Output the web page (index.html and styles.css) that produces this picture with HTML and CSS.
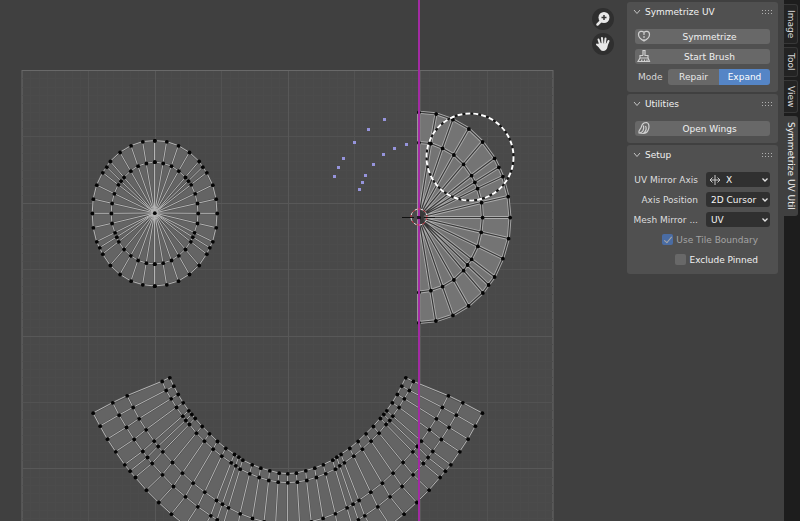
FILE: index.html
```html
<!DOCTYPE html>
<html lang="en">
<head>
<meta charset="utf-8">
<title>UV Editor</title>
<link rel="stylesheet" href="styles.css">
</head>
<body>
<div class="editor">
  <svg class="uv-canvas" aria-label="UV layout">
    <rect class="tile" x="22" y="70.5" width="531" height="531"/>
    <g id="grid"></g>
    <g id="meshes"></g>
    <g id="pinned"></g>
    <path class="mirror-axis" d="M419 0V2000"/>
    <circle class="brush-back" cx="470" cy="157" r="43.5"/>
    <circle class="brush" cx="470" cy="157" r="43.5"/>
    <circle class="cursor-back" cx="419" cy="217" r="8"/>
    <circle class="cursor-ring" cx="419" cy="217" r="8"/>
    <path class="cursor-cross" d="M402 217.500H414M424 217.500H435"/>
    <rect x="417" y="216" width="3" height="3" fill="#26122a"/>
  </svg>
  <main class="viewport">
    <div class="gizmos">
      <button class="gizmo" type="button" aria-label="Zoom">
        <svg width="22" height="22" viewBox="0 0 22 22"><path d="M9 13L5.500 16.500" stroke="#e8e8e8" stroke-width="2.500" stroke-linecap="round"/><circle cx="12" cy="9.500" r="5.500" fill="#e8e8e8"/><path d="M9.500 9.500H14.500M12 7V12" stroke="#333" stroke-width="1.500"/></svg>
      </button>
      <button class="gizmo" type="button" aria-label="Pan">
        <svg width="22" height="22" viewBox="0 0 22 22"><g fill="none" stroke="#e8e8e8" stroke-width="2" stroke-linecap="round"><path d="M8 11L6.500 6.500M10.500 10L10 5M13 10L13.500 5.500M15 11.500L16.500 8M8 14L5 11.500"/></g><path d="M7 10L16 10.500L15.500 14Q14.500 18 11 18Q9 18 7.500 15.500L5.500 12Z" fill="#e8e8e8"/></svg>
      </button>
    </div>
  </main>
  <aside class="sidebar">
    <section class="panel">
      <h2 class="panel-title"><svg class="chevron" viewBox="0 0 8 6"><path d="M1 1L4 4.500L7 1"/></svg>Symmetrize UV<span class="grip"></span></h2>
      <div class="rows">
        <button class="op" type="button"><svg class="op-icon" viewBox="0 0 14 14"><path d="M7 3.500C5.500 1.500 1.500 2 1.500 5.500C1.500 9 5 11 7 12C9 11 12.500 9 12.500 5.500C12.500 2 8.500 1.500 7 3.500Z"/><path stroke-dasharray="2 1" d="M7 4V11"/></svg>Symmetrize</button>
        <button class="op" type="button"><svg class="op-icon" viewBox="0 0 14 14"><path d="M6 6.500V1.500H8V6.500H11V9H3V6.500H6M3 9L1 12.500H12.500L11 9M4.500 12.500L5 10.500M7.500 12.500V10.500M10 12.500V10.500"/></svg>Start Brush</button>
        <div class="mode">
          <span class="mode-label" id="mode">Mode</span>
          <div class="segments" role="group" aria-labelledby="mode">
            <button class="segment" type="button">Repair</button>
            <button class="segment active" type="button">Expand</button>
          </div>
        </div>
      </div>
    </section>
    <section class="panel">
      <h2 class="panel-title"><svg class="chevron" viewBox="0 0 8 6"><path d="M1 1L4 4.500L7 1"/></svg>Utilities<span class="grip"></span></h2>
      <div class="rows">
        <button class="op" type="button"><svg class="op-icon" viewBox="0 0 14 14"><path d="M2 12C1 9 4 8.500 4.500 5.500Q5.500 1.500 9.500 1.500C12.500 2 12.500 7 11 9.500Q9.500 12.500 6.500 12.500ZM2.500 12C5.500 11.500 7.500 9 6.500 4.500M6.500 12.500C9 10 10 7.500 8.500 5"/></svg>Open Wings</button>
      </div>
    </section>
    <section class="panel">
      <h2 class="panel-title"><svg class="chevron" viewBox="0 0 8 6"><path d="M1 1L4 4.500L7 1"/></svg>Setup<span class="grip"></span></h2>
      <div class="rows">
        <div class="field">
          <label for="axis">UV Mirror Axis</label>
          <div class="pick">
            <svg class="axis-icon" viewBox="0 0 12 10"><path d="M6 0V10M1 5H11M3.500 2.500L1 5L3.500 7.500M8.500 2.500L11 5L8.500 7.500"/></svg>
            <select id="axis" class="with-icon"><option>X</option><option>Y</option></select>
            <svg class="arrow" viewBox="0 0 8 6"><path d="M1.500 1.500L4 4L6.500 1.500"/></svg>
          </div>
        </div>
        <div class="field">
          <label for="position">Axis Position</label>
          <div class="pick">
            <select id="position"><option>2D Cursor</option></select>
            <svg class="arrow" viewBox="0 0 8 6"><path d="M1.500 1.500L4 4L6.500 1.500"/></svg>
          </div>
        </div>
        <div class="field">
          <label for="mesh">Mesh Mirror ...</label>
          <div class="pick">
            <select id="mesh"><option>UV</option></select>
            <svg class="arrow" viewBox="0 0 8 6"><path d="M1.500 1.500L4 4L6.500 1.500"/></svg>
          </div>
        </div>
        <label class="check muted"><input type="checkbox" checked disabled>Use Tile Boundary</label>
        <label class="check"><input type="checkbox">Exclude Pinned</label>
      </div>
    </section>
  </aside>
  <nav class="tabs">
    <button class="tab" type="button">Image</button>
    <button class="tab" type="button">Tool</button>
    <button class="tab" type="button">View</button>
    <button class="tab current" type="button">Symmetrize UV Util</button>
  </nav>
</div>
<script src="mesh.js"></script>
</body>
</html>
```
FILE: styles.css
```css
* { box-sizing: border-box; }
body {
  margin: 0;
  background: #404040;
  color: #f0f0f0;
  font: 9px/14px "DejaVu Sans", sans-serif;
}
button, select, input { font: inherit; color: inherit; margin: 0; }
.editor {
  position: relative;
  display: flex;
  min-height: 100vh;
  overflow: hidden;
}
.uv-canvas { position: absolute; inset: 0; width: 100%; height: 100%; }
.tile { fill: #494949; stroke: #696969; stroke-width: 1; }
.grid-minor { stroke: #4b4b4b; fill: none; }
.grid-major { stroke: #525252; fill: none; }
.grid-strong { stroke: #585858; fill: none; }
.face { fill: #646464; }
.face.bright { fill: #747474; }
.edge { fill: none; stroke: #b4b4b4; stroke-width: 1; }
.edge-under { fill: none; stroke: #505050; stroke-width: 2; }
.edge.selected { stroke: #acacac; stroke-width: 3; }
.edge-core { fill: none; stroke: #383838; stroke-width: 1.2; }
.vertex { fill: #050505; }
.pin { fill: #9694dc; }
.mirror-axis { stroke: #a32ba3; stroke-width: 2; }
.brush-back { fill: none; stroke: #151515; stroke-width: 2; }
.brush { fill: none; stroke: #fff; stroke-width: 2; stroke-dasharray: 5 3; }
.cursor-back { fill: none; stroke: #e8e8e8; stroke-dasharray: 3 3; stroke-dashoffset: 3; }
.cursor-ring { fill: none; stroke: #d83a4a; stroke-dasharray: 3 3; }
.cursor-cross { stroke: #111; fill: none; }

.viewport { position: relative; flex: 1; display: flex; justify-content: flex-end; padding: 8px 13px; }
.gizmos { display: flex; flex-direction: column; gap: 3px; }
.gizmo {
  width: 22px;
  height: 22px;
  padding: 0;
  border: 0;
  border-radius: 50%;
  background: #2f2f2f;
}
.gizmo svg { display: block; fill: none; }

.sidebar {
  position: relative;
  display: flex;
  flex-direction: column;
  gap: 2px;
  width: 151px;
  margin-right: 6px;
  padding-top: 2px;
}
.panel { background: #505050; border-radius: 3px; padding: 0 8px 7px; }
.panel-title {
  display: flex;
  align-items: center;
  height: 20px;
  margin: 0 0 7px;
  font-size: 9px;
  font-weight: 400;
}
.chevron { flex: none; width: 8px; height: 6px; margin: 0 4px 0 -2px; fill: none; stroke: #c4c4c4; }
.grip {
  width: 12px;
  height: 6px;
  margin-left: auto;
  margin-right: -3px;
  background: radial-gradient(circle, #b0b0b0 1px, transparent 1px) 0 0 / 3px 3px;
}
.rows { display: flex; flex-direction: column; gap: 5px; }
.op {
  position: relative;
  display: flex;
  align-items: center;
  justify-content: center;
  height: 15px;
  padding: 0 0 0 14px;
  border: 0;
  border-radius: 3px;
  background: #686868;
}
.op-icon { position: absolute; left: 2px; top: 0; width: 14px; height: 14px; fill: none; stroke: #d0d0d0; stroke-width: 1.2; }
.mode { display: flex; align-items: center; justify-content: space-between; color: #d8d8d8; padding-left: 3px; }
.segments { display: flex; width: 102px; border-radius: 3px; overflow: hidden; }
.segment { flex: 1; height: 16px; padding: 0; border: 0; background: #686868; color: #eaeaea; }
.segment.active { background: #5585c6; color: #fff; }
.field { display: flex; align-items: center; justify-content: flex-end; gap: 8px; white-space: nowrap; color: #dedede; }
.pick { position: relative; flex: none; width: 64px; color: #f4f4f4; }
.pick select {
  display: block;
  appearance: none;
  width: 100%;
  height: 15px;
  padding: 0 0 0 5px;
  border: 0;
  border-radius: 3px;
  background: #303030;
}
.pick select.with-icon { padding-left: 20px; }
.axis-icon { position: absolute; left: 3px; top: 3px; width: 12px; height: 10px; fill: none; stroke: #c9c9c9; pointer-events: none; }
.arrow { position: absolute; right: 1px; top: 5px; width: 8px; height: 6px; fill: none; stroke: #e4e4e4; stroke-width: 1.3; pointer-events: none; }
.check { display: flex; align-items: center; justify-content: flex-end; gap: 3px; height: 15px; padding-right: 12px; }
.check input { appearance: none; width: 11px; height: 11px; border-radius: 2px; background: #686868; }
.check input:checked { background: #4a6ca3; position: relative; }
.check input:checked::after {
  content: "";
  position: absolute;
  left: 4px;
  top: 1px;
  width: 3px;
  height: 7px;
  border: solid #a8a8a8;
  border-width: 0 1px 1px 0;
  transform: rotate(40deg);
}
.muted { color: #a4a4a4; }

.tabs {
  position: relative;
  display: flex;
  flex-direction: column;
  align-items: flex-start;
  gap: 3px;
  width: 16px;
  padding-top: 4px;
  background: #1d1d1d;
}
.tab {
  writing-mode: vertical-rl;
  width: 14px;
  line-height: 12px;
  padding: 5px 0;
  border: 1px solid #383838;
  border-left: 0;
  border-radius: 0 3px 3px 0;
  background: #232323;
  color: #d8d8d8;
  white-space: nowrap;
}
.tab.current { background: #404040; border-color: #404040; color: #f0f0f0; }
```
FILE: mesh.js
```js
const NS = "http://www.w3.org/2000/svg";
const byId = id => document.getElementById(id);

function add(parent, tag, attrs) {
  const el = document.createElementNS(NS, tag);
  for (const k in attrs) el.setAttribute(k, attrs[k]);
  parent.appendChild(el);
}

// Each ring is stored at three units per pixel, relative to an origin.
const toPixels = (ring, ox, oy) => ring.map(([x, y]) => [ox + x / 3, oy + y / 3]);
const mirror = (ring, axis) => ring.map(([x, y]) => [2 * axis - x, y]).reverse();
const line = pts => "M" + pts.map(p => p.map(n => n.toFixed(1)).join(" ")).join("L");

function draw(rings, hub, bright) {
  const g = byId("meshes");
  const outer = rings[0];
  const last = rings[rings.length - 1];
  const boundary = hub ? outer : outer.concat([...last].reverse());
  add(g, "path", { class: "face" + (bright ? " bright" : ""), d: line(boundary) + "Z" });
  let d = rings.map(line).join("");
  outer.forEach((p, i) => {
    const spoke = rings.map(r => r[i]);
    if (hub) spoke.push(hub);
    d += line(spoke);
  });
  if (bright) {
    add(g, "path", { class: "edge selected", d });
    add(g, "path", { class: "edge-core", d });
  } else {
    add(g, "path", { class: "edge-under", d });
    add(g, "path", { class: "edge", d });
  }
  rings.flat().concat(hub ? [hub] : []).forEach(([x, y]) =>
    add(g, "circle", { class: "vertex", cx: (x + 0.2).toFixed(1), cy: (y + 0.2).toFixed(1), r: 1.9 }));
}

let minor = "", major = "", strong = "";
for (let i = 1; i < 64; i++) {
  const x = Math.round(22 + i * 8.3) + 0.5, y = Math.round(70 + i * 8.3) + 0.5;
  const d = `M${x} 71V601M22.5 ${y}H553`;
  if (i % 16 === 0) strong += d;
  else if (i % 8 === 0) major += d;
  else minor += d;
}
add(byId("grid"), "path", { class: "grid-minor", d: minor });
add(byId("grid"), "path", { class: "grid-major", d: major });
add(byId("grid"), "path", { class: "grid-strong", d: strong });

const disc = [
  [[223,31],[259,34],[294,46],[327,66],[356,93],[367,110],[379,127],[397,164],[407,206],[410,249],[407,292],[397,334],[388,352],[379,371],[356,405],[327,432],[294,452],[259,463],[223,467]],
  [[223,95],[248,99],[273,107],[295,122],[315,141],[324,152],[332,163],[344,190],[351,219],[353,249],[351,279],[342,307],[337,320],[331,334],[315,357],[295,376],[273,390],[248,398],[223,401]]
].map(r => toPixels(r, 80.3, 130.3)).map(r => r.concat(mirror(r, 154.6)));
draw(disc, [154.6, 213], false);

const half = [
  [[0,-316],[52,-311],[102,-294],[150,-266],[191,-227],[227,-178],[240,-151],[252,-123],[268,-63],[274,0],[269,63],[252,123],[227,178],[209,202],[192,226],[149,265],[102,293],[51,310],[0,315]],
  [[0,-225],[36,-222],[71,-208],[105,-188],[134,-160],[158,-126],[168,-106],[176,-87],[188,-45],[191,0],[187,44],[177,86],[158,125],[146,142],[134,159],[105,187],[71,207],[36,219],[0,224]]
].map(r => toPixels(r, 418.7, 217.5));
draw(half, [418.7, 217.5], true);

const band = [
  [[38,128],[59,167],[81,206],[106,244],[133,283],[149,302],[165,321],[198,359],[235,396],[273,431],[315,465],[360,493],[382,507],[405,520],[450,545],[495,562],[540,575],[580,583],[622,587]],
  [[97,97],[116,134],[138,171],[161,207],[187,243],[201,261],[215,279],[246,313],[279,348],[315,379],[352,409],[391,436],[410,448],[430,460],[470,481],[510,497],[548,508],[585,515],[622,518]],
  [[140,76],[158,111],[176,145],[197,178],[221,212],[233,228],[247,244],[276,276],[306,308],[338,338],[373,365],[408,390],[426,401],[444,412],[479,430],[516,444],[551,454],[586,460],[622,463]],
  [[245,33],[257,60],[272,85],[288,111],[307,137],[316,150],[327,162],[348,188],[372,212],[398,236],[424,257],[452,277],[466,286],[479,296],[508,310],[536,321],[565,330],[593,335],[622,337]],
  [[268,22],[280,47],[293,72],[308,97],[325,121],[334,132],[344,144],[365,168],[387,190],[411,213],[436,234],[462,252],[475,260],[487,269],[515,283],[541,293],[568,301],[596,308],[622,310]]
].map(r => toPixels(r, 80.3, 370.3)).map(r => r.concat(mirror(r, 287.6).slice(1)));
draw(band, null, false);

[[177,59],[130,88],[89,127],[54,174],[40,202],[28,229],[244,133],[208,145],[175,164],[145,194],[122,227],[112,247],[104,267]].forEach(([x, y]) =>
  add(byId("pinned"), "rect", { class: "pin", x: Math.round(325 + x / 3 - 1.5), y: Math.round(100 + y / 3 - 1.5), width: 3, height: 3 }));
```
